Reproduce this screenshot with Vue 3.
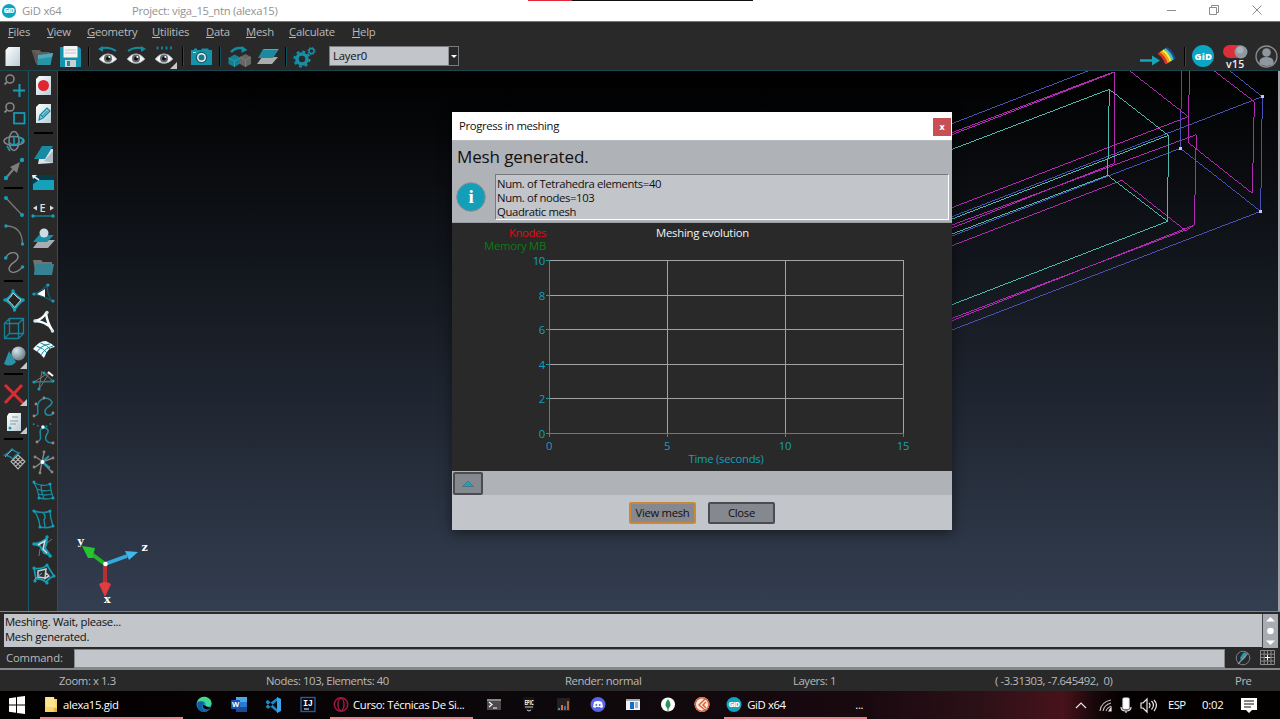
<script setup>
const menus = ['Files', 'View', 'Geometry', 'Utilities', 'Data', 'Mesh', 'Calculate', 'Help']

const T = '#12a0ba'
const dot = (x, y, r = 2, c = T) => `<circle cx="${x}" cy="${y}" r="${r}" fill="${c}"/>`
const dots = (pts, r, c) => pts.map(([x, y]) => dot(x, y, r, c)).join('')
const corner = '<path d="M27 20v7h-7z" fill="#c8c8c8"/>'
const defs =
  '<defs><linearGradient id="paper" x1="0" y1="0" x2="1" y2="1"><stop offset="0" stop-color="#fff"/><stop offset="1" stop-color="#b9cdd6"/></linearGradient></defs>'
const eye =
  '<path d="M5 17Q14 6.500 23 17Q14 26 5 17z" fill="#f2f4f6" stroke="#9aa0a4" stroke-width=".7"/><circle cx="14" cy="16.500" r="4" fill="#60676c"/><circle cx="14" cy="16.500" r="2" fill="#111"/><circle cx="15.300" cy="15" r="1" fill="#fff"/>'

const topTools = [
  [
    defs + '<path d="M8.500 5H20v19H5.500V8z" fill="url(#paper)"/>',
    '<path d="M3.500 8h8l2 2h8v5L8 22z" fill="#625e5b"/><path d="M10 13l15-2-2.500 12H9z" fill="#2794a7"/><path d="M9 13h4l12-2-1 4-14 2z" fill="#4fa9b8"/><path d="M3.500 8l5.500 14 1-9z" fill="#555"/>',
    '<path d="M4 5h19l2 2v18H4z" fill="#1593ad"/><rect x="7.500" y="4" width="14" height="11.500" fill="#f4f4f4"/><path d="M9 8h11M9 11h11" stroke="#c4c4c4"/><rect x="9" y="18" width="11" height="7" fill="#c9d1d4"/><rect x="11" y="19" width="3" height="5" fill="#168da5"/>'
  ],
  [
    eye + '<path d="M22 9Q15 4 7 6.500" fill="none" stroke="#128ca3" stroke-width="2"/><path d="M9 4v6L4 7z" fill="#128ca3"/>',
    eye + '<path d="M6 9Q13 4 21 6.500" fill="none" stroke="#128ca3" stroke-width="2"/><path d="M19 4v6l5-3z" fill="#128ca3"/>',
    eye + '<path d="M7.500 4.500v3M12 4.500v3M16.500 4.500v3M21 4.500v3" stroke="#128ca3" stroke-width="1.700"/>' + corner
  ],
  [
    '<path d="M4 8h3V6.500h3V8h4l1-1.500h6L22 8h3v15H4z" fill="#1692aa"/><circle cx="14.500" cy="15.500" r="5.700" fill="#1f5865"/><circle cx="14.500" cy="15.500" r="4.500" fill="#f1f4f5"/><circle cx="14.500" cy="15.500" r="3" fill="#167b91"/><path d="M6 10.500h3" stroke="#a7dfe8"/>'
  ],
  [
    '<path d="M6 10Q12 4 19 7" fill="none" stroke="#128ca3" stroke-width="2.500"/><path d="M16.500 4l6 4-6 3z" fill="#128ca3"/><path d="M3.500 16l6-3.500 6 3v6l-6 3.500-6-3z" fill="#167f91"/><path d="M3.500 16l6 3 6-3M9.500 19v6" stroke="#2f9bab" fill="none"/><path d="M15 15l5.500-3 5.500 3v7l-5.500 3-5.500-3z" fill="#666"/><path d="M15 15l5.500 3 5.500-3M20.500 18v7" stroke="#7c7c7c" fill="none"/>',
    '<path d="M9 15h16l-6 7H4z" fill="#a9adb0"/><path d="M10 7h16l-6 9H5z" fill="#198a9f"/><path d="M11 7.500h14" stroke="#5fa9b7"/>'
  ],
  [
    '<circle cx="12" cy="17" r="5" fill="none" stroke="#168fa7" stroke-width="3.500"/><circle cx="12" cy="17" r="7.500" fill="none" stroke="#168fa7" stroke-width="2.200" stroke-dasharray="2.950 2.940"/><circle cx="21.500" cy="9" r="2.500" fill="none" stroke="#168fa7" stroke-width="1.500"/><circle cx="21.500" cy="9" r="3.700" fill="none" stroke="#168fa7" stroke-width="1" stroke-dasharray="1.450 1.450"/>'
  ]
]

const leftTools = [
  [
    '<circle cx="10" cy="7" r="4" fill="none" stroke="#858585" stroke-width="1.600"/><path d="M7 10l-2.500 2.500" stroke="#858585" stroke-width="1.800"/><path d="M19.500 12v13M13 18.500h12" stroke="#159eb9" stroke-width="2"/>',
    '<circle cx="10" cy="7" r="4" fill="none" stroke="#858585" stroke-width="1.600"/><path d="M7 10l-2.500 2.500" stroke="#858585" stroke-width="1.800"/><rect x="14" y="13" width="10.500" height="10.500" fill="none" stroke="#159eb9" stroke-width="1.700"/>',
    '<ellipse cx="14" cy="13" rx="10" ry="4.500" fill="none" stroke="#80878c" stroke-width="1.500"/><ellipse cx="14" cy="13" rx="5" ry="9.500" fill="none" stroke="#7b8a90" stroke-width="1.500"/><path d="M14 8v9M10 15q4 4 10-1" stroke="#159eb9" stroke-width="1.500" fill="none"/><path d="M18 9l5 2-2 5M10 23l-3-5" fill="none" stroke="#159eb9" stroke-width="1.500"/>',
    '<path d="M6 22L17 9" stroke="#7d7d7d" stroke-width="2"/><path d="M20 6l-3 11-7-6z" fill="#7d7d7d"/>' + dots([[22, 4], [6, 22]], 2.2)
  ],
  [
    '<path d="M6 5l16 17" stroke="#777" stroke-width="1.300"/>' + dots([[6, 5], [22, 22]]),
    '<path d="M6 5Q22 5 22.500 23" fill="none" stroke="#777" stroke-width="1.300"/>' + dots([[6, 5], [22.5, 23]], 1.7),
    '<path d="M6 9C8 2 18 2 18 8C18 13 9 14 9 20C10 26 19 23 22 18" fill="none" stroke="#888" stroke-width="1.400"/>' + dots([[5.7, 9], [22.5, 18]], 1.8)
  ],
  [
    '<path d="M13 5Q17 11 23.500 14Q19 18 14.500 24Q11 18 5 14Q10 11 13 5z" fill="#159eb9" stroke="#159eb9" stroke-width="1.500"/><path d="M13 7Q17 11.500 21 14Q18 17 14.500 21.500Q11.500 17 7.500 14Q11 11.500 13 7z" fill="#252525" stroke="#d0d0d0"/>' + dots([[13, 5], [23, 14], [14.5, 24], [5, 14]], 1.7),
    '<path d="M4.500 9.500h14v15h-14zM9.500 4.500h14v15h-14zM4.500 9.500l5-5M18.500 9.500l5-5M4.500 24.500l5-5M18.500 24.500l5-5" fill="none" stroke="#158299" stroke-width="1.300"/>',
    '<defs><radialGradient id="ball" cx=".35" cy=".3" r=".7"><stop offset="0" stop-color="#d4e6eb"/><stop offset="1" stop-color="#6f8188"/></radialGradient></defs><circle cx="18.500" cy="11.500" r="7" fill="url(#ball)"/><path d="M9 9l7 11q-5 6-12 2z" fill="#2b91a6"/>' + corner
  ],
  [
    '<path d="M5 6l18 18M22 6L5 24" stroke="#d92d36" stroke-width="3"/>' + corner,
    defs + '<path d="M9 6h12v18H7V9z" fill="url(#paper)"/><path d="M12 10h6M10 14h8M10 17h6" stroke="#8d989e"/><circle cx="10" cy="21" r="1.500" fill="#159eb9"/>' + corner
  ],
  [
    '<path d="M12 5q3 3 7 4-4 2-6 6-3-3-8-4 4-2 7-6z" fill="none" stroke="#218397" stroke-width="1.500"/><path d="M12 6L5 13" stroke="#999"/><path d="M18 11l7 6.500-7 7.500-7-7.500zM15.700 13.200l7 7M20.300 13.200l-7 7M13.300 15.400l7 7M22.700 15.400l-7 7" fill="none" stroke="#b5b5b5" stroke-width="1.100"/>'
  ]
]

const secondTools = [
  [
    '<path d="M10 4h12v19H7V7z" fill="url(#paper)"/><circle cx="14.500" cy="13.500" r="5.500" fill="#e22630"/>',
    '<path d="M10 4h12v19H7V7z" fill="url(#paper)"/><path d="M10 20l1-5 7-7 3 3-7 7z" fill="#8ecbd7" stroke="#1588a0" stroke-width="1.200"/><path d="M12 15l3 3M12.500 17l6-6" stroke="#1588a0"/>'
  ],
  [
    '<path d="M12 9h12v14l-15 1z" fill="#d8e4e8"/><path d="M13 6h11l-8 13H5z" fill="#188ba3"/><path d="M15 21l9-10v12z" fill="#aebdc3"/>',
    '<rect x="3" y="7" width="22" height="15" fill="#083b45"/><path d="M10 12h15v10H4v-6z" fill="#17a0bb"/><path d="M4 8l6 4" stroke="#eee" stroke-width="1.600"/><path d="M3 7h5L4 11z" fill="#eee"/>',
    '<text x="10.500" y="16" font-family="Open Sans" font-size="11" font-weight="600" fill="#dedede">E</text><path d="M4 12l4-2.500v5zM25 12l-4-2.500v5z" fill="#ddd"/><path d="M5 20h19" stroke="#16808f" stroke-width="1.500"/>' + dots([[4, 20], [24, 20]], 1.7),
    '<path d="M10 16h16l-7 8H4z" fill="#a7adb1"/><path d="M10 11h15l-7 7H4z" fill="#178fa7"/><circle cx="15" cy="9" r="4.500" fill="#cbdce3"/>',
    '<path d="M4 8h8l2 2h9v8H6z" fill="#737373"/><path d="M6 12h19l-2 11H5z" fill="#378292"/>',
    '<path d="M18 5q0 9 5 16-8-5-18-7 8-3 13-9z" fill="none" stroke="#185a66" stroke-width="1.400"/><path d="M16 9v8l-8-3z" fill="#fff"/>' + dots([[19, 5], [24, 21], [5, 14]], 1.6),
    '<path d="M17 5q1 9 6 17-3-5-8-7-4-2-9-2 8-2 11-8z" fill="#203238" stroke="#fff" stroke-width="2.400" stroke-linejoin="round"/>' + dots([[18, 4.5], [23.5, 23], [6, 13]], 1.7, '#bdf0f7'),
    '<path d="M4 13q7-9 13-8 5 2 9 6-7 0-11 11-5-6-11-9z" fill="#effcff"/><path d="M7.500 10q7 2 10.500 7M11.500 7q7 2 9.500 6M8 16q4-7 13-8M12 19q4-7 12-9" stroke="#148aa0" fill="none"/>',
    '<path d="M5 18l16-10-11 17 3-18M6 18l18-1L15 9" fill="none" stroke="#777" stroke-width="1"/><path d="M5 18h19" stroke="#287783"/>' + dots([[5, 18], [10, 25], [24, 17], [15, 9]], 1.6) + '<path d="M19 8l5 4" stroke="#fff" stroke-width="2"/>',
    '<path d="M5 24c7-1 2-7 4-12 2-6 10-8 14-2 0 5-8 5-7 10 1 5 6 3 8 2" fill="none" stroke="#198ca0" stroke-width="1.500"/>' + dots([[5, 24], [24, 21], [7, 12], [15, 6]], 1.4, '#988'),
    '<path d="M8 22c7-2 1-10 4-13 5-3 9 1 6 5-3 5-1 9 6 9" fill="none" stroke="#198ca0" stroke-width="1.500"/><path d="M4 4l8 3h4l7-4" stroke="#159eb9" stroke-dasharray="1.500 3" stroke-width="1.500" fill="none"/>' + dots([[8, 22], [24, 23]], 1.4, '#988') + dot(14, 7, 1.7, '#fff'),
    '<path d="M5 20l8-6 2-9M13 14l11-4M13 14l10 10M14 14L7 9M13 14l-2 10" fill="none" stroke="#888" stroke-width="1.400"/><path d="M12 15l8-7M15 15l6 5" stroke="#159eb9" stroke-width="2"/>' + dots([[5, 19], [15, 4], [24, 10], [23, 24], [11, 25], [6, 9]], 1.4, '#888') + dot(13.5, 14, 2, '#fff'),
    '<path d="M5 7q10 4 16 1 1 7 3 14-6 2-14 0Q9 13 5 7zM12 9q0 7 3 14M8 13q7 3 14 1M9 18q7 2 14 0" fill="none" stroke="#198ca0" stroke-width="1.300"/>' + dots([[5, 6], [21, 8], [24, 22], [10, 22]], 1.5),
    '<path d="M5 7q10 3 16 0 0 7 3 15-6 3-13 1Q10 13 5 7zM13 8q5 4 2 8l1 7" fill="none" stroke="#198ca0" stroke-width="1.400"/>' + dots([[5, 7], [21, 7], [24, 22], [11, 23]], 1.5),
    '<path d="M5 12q8-1 13-6 0 6-2 10l5 7-6-2-4-7z" fill="#26353a" stroke="#159eb9" stroke-width="2"/><path d="M9 13l7-4-2 8 4 4" fill="none" stroke="#ddd" stroke-width="1.500"/><path d="M23 7l-5 4M11 17l-1 7" fill="none" stroke="#777"/>' + dots([[18, 5], [5, 12], [21, 24]], 1.7),
    '<path d="M5 8q8 2 13-3l7 11q-5 2-8 6-5-4-10-3z" fill="#233237" stroke="#159eb9" stroke-width="1.700"/><path d="M9 11l8-2-1 9-7-1zM16 12l4 4-5 3" fill="none" stroke="#ccc" stroke-width="1.500"/><path d="M5 20l8-7" stroke="#7aa"/>' + dots([[5, 8], [18, 5], [25, 16], [6, 21], [18, 23]], 1.6)
  ]
]

const xTicks = [0, 1, 2, 3].map(i => ({ x: Math.floor(549 + i * 118.2) + 0.5, label: i * 5 }))
const yTicks = [0, 1, 2, 3, 4, 5].map(i => ({ y: Math.round(434 - i * 34.6) - 0.5, label: i * 2 }))

const status = ['Zoom: x 1.3', 'Nodes: 103, Elements: 40', 'Render: normal', 'Layers: 1', '( -3.31303, -7.645492,\u00a0 0)', 'Pre']

const appIcons = {
  start: '<path d="M2 4.200l7-1v7.300H2zM10 3l8-1v8.500h-8zM2 11.500h7v7.300l-7-1zM10 11.500h8V20l-8-1z" fill="#fff"/>',
  folder: '<path d="M4 3h9v2h3v13H4z" fill="#f6d56c"/><path d="M5 3h8l2 10H5z" fill="#ffe391"/><path d="M13 14h3v4h-3z" fill="#e8b63c"/>',
  edge: '<circle cx="10" cy="10.500" r="7.500" fill="#178dd5"/><path d="M3 8C6 0 17 2 17.500 9c0 5-6 4-6 2 1-4-4-5-8.500-3z" fill="#43d78e"/><path d="M4 8c6-2 7 2 4 4 0 5 5 4 8 2-2 5-9 5-12 0-1-3 0-6 0-6z" fill="#125d9f"/><path d="M9 11c3 0 3 3 8 2l-2 2c-4 1-7-1-6-4z" fill="#090507"/>',
  word: '<path d="M7 3h10q1 0 1 1v13q0 1-1 1H7z" fill="#287bd3"/><path d="M7 3h11v5H7z" fill="#4ba6ec"/><path d="M7 13h11v5H7z" fill="#174c99"/><rect x="2" y="6" width="9" height="9" rx="1" fill="#1751af"/><text x="6.500" y="13" text-anchor="middle" font-family="Open Sans" font-size="7.500" font-weight="700" fill="#fff">W</text>',
  code: '<path d="M3 7l2-1 10 10V19L3 9zM3 13l2 2L15 6V3L3 12z" fill="#168acd"/><path d="M14 3l4 2v12l-4 2z" fill="#32a7ee"/>',
  idea: '<rect x="3" y="3.500" width="14" height="14" fill="#05070c" stroke="#245b9c" stroke-width="1.400"/><text x="5" y="11.500" font-family="Liberation Mono" font-size="8.500" font-weight="700" fill="#fff">IJ</text><path d="M6 15h5" stroke="#fff"/>',
  opera: '<ellipse cx="10" cy="10.500" rx="6.700" ry="6.700" fill="none" stroke="#a3183e" stroke-width="1.500"/><ellipse cx="10" cy="10.500" rx="3" ry="6" fill="none" stroke="#a3183e" stroke-width="1.500"/>',
  term: '<rect x="3" y="5" width="14" height="11" fill="#4b4b4d"/><path d="M3 5h14v2H3z" fill="#888"/><path d="M5 8l3 2.500-3 2.500M9 14h4" fill="none" stroke="#fff" stroke-width="1.200"/>',
  epic: '<path d="M4.500 3h11v12l-5.500 3-5.500-3z" fill="#161416"/><text x="10" y="10.500" text-anchor="middle" font-family="Open Sans" font-size="7" font-weight="700" textLength="9" lengthAdjust="spacingAndGlyphs" fill="#eee">EPIC</text><path d="M6 13h8M8 16l2 1 2-1" stroke="#ccc" fill="none"/>',
  bars: '<rect x="4" y="4" width="13" height="13" fill="#252020"/><path d="M6 14v2" stroke="#4f9668" stroke-width="2"/><path d="M9 11v5" stroke="#e96436" stroke-width="2"/><path d="M12 12v4" stroke="#436db0" stroke-width="2"/><path d="M15 7v9" stroke="#b36a27" stroke-width="2"/>',
  discord: '<circle cx="10" cy="10.500" r="7.500" fill="#5965e8"/><path d="M6 8q4-2 8 0l1 5-2 1-1-1H8l-1 1-2-1z" fill="#fff"/><circle cx="8.300" cy="11" r="1" fill="#5965e8"/><circle cx="11.700" cy="11" r="1" fill="#5965e8"/>',
  panel: '<rect x="3" y="5" width="14" height="11" fill="#f2f2f2"/><path d="M3 5h14v2H3z" fill="#aaa"/><rect x="7" y="8" width="4" height="7" fill="#176bc0"/><path d="M12 9h3M12 11h3M12 13h3" stroke="#287bc7"/>',
  leaf: '<circle cx="10" cy="10.500" r="7" fill="#fff"/><path d="M10 5q5 6 0 10-5-4 0-10z" fill="#29965b"/><path d="M10 10v7" stroke="#4a7d59"/>',
  chip: '<circle cx="10" cy="10.500" r="7.500" fill="#f2ece7"/><path d="M13 5l-6 6 6 5M14 8l-3 3 3 3" fill="none" stroke="#dc6638" stroke-width="1.500"/><circle cx="10" cy="10.500" r="6.700" fill="none" stroke="#da6335" stroke-width="1.400"/>',
  gid: '<circle cx="10" cy="10.500" r="7.500" fill="#10a3bd"/><text x="10" y="13" text-anchor="middle" font-family="Open Sans" font-size="7" font-weight="800" textLength="11" fill="#fff">GiD</text>'
}
const pinned1 = ['edge', 'word', 'code', 'idea']
const pinned2 = ['term', 'epic', 'bars', 'discord', 'panel', 'leaf', 'chip']
</script>

<template>
  <div class="screen">
    <header class="titlebar">
      <i class="topmark"></i>
      <svg class="logo" viewBox="1.500 2 17 17" v-html="appIcons.gid"></svg>
      <span class="app-name">GiD x64</span>
      <span class="project">Project: viga_15_ntn (alexa15)</span>
      <svg class="win" width="100" height="21" viewBox="0 0 100 21" fill="none" stroke="#8c8c8c">
        <path d="M2 10.500h9M44.500 7.500h7v7h-7zM46.500 7.500v-2h7v7h-2M87.500 5.500l9 9M96.500 5.500l-9 9" />
      </svg>
    </header>

    <nav class="menu">
      <span v-for="m in menus" :key="m"><u>{{ m[0] }}</u>{{ m.slice(1) }}</span>
    </nav>

    <div class="toolbar">
      <template v-for="(group, g) in topTools" :key="g">
        <i v-if="g" class="vsep"></i>
        <svg v-for="(ic, i) in group" :key="i" class="ic" viewBox="0 0 28 28" v-html="ic"></svg>
      </template>
      <div class="combo"><span>Layer0</span><b></b></div>
      <div class="right-tools">
        <svg width="40" height="28" viewBox="0 0 40 28">
          <path d="M0 18.500h14" stroke="#1ba3b8" stroke-width="2.500" /><path d="M12 13.500l8 5-8 5z" fill="#1ba3b8" />
          <g fill="none" stroke-width="2.600">
            <path d="M26.500 6q6 4 8 11" stroke="#194d8e" /><path d="M24.500 7.200q6 4 8 11" stroke="#3ec0d3" />
            <path d="M22.500 8.400q6 4 8 11" stroke="#f5ee3c" /><path d="M20.500 9.600q6 4 8 11" stroke="#f79a20" />
            <path d="M18.500 11q6 4 8 11" stroke="#e33127" />
          </g>
        </svg>
        <i class="vsep"></i>
        <svg width="22" height="22" viewBox="0 0 22 22">
          <circle cx="11" cy="11" r="11" fill="#0ba6c3" />
          <text x="11" y="14.500" text-anchor="middle" class="gidtext" textLength="17">GiD</text>
        </svg>
        <svg width="28" height="27" viewBox="0 0 28 27">
          <rect x="1" y="2" width="23" height="13" rx="6.500" fill="#dd2f3b" />
          <circle cx="19" cy="9" r="6.500" fill="#8e98a1" /><circle cx="18" cy="7" r="3.500" fill="#a9b1b8" />
          <text x="4" y="24.500" class="ver" textLength="18">v15</text>
        </svg>
        <svg width="23" height="23" viewBox="0 0 23 23">
          <circle cx="11.500" cy="11.500" r="10.500" fill="#2d2d2f" stroke="#8b8b8b" stroke-width="1.300" />
          <circle cx="11.500" cy="7.500" r="4.300" fill="#8e979f" /><path d="M4.500 19q-1-7 7-7t7 7q-7 4-14 0z" fill="#8e979f" />
        </svg>
      </div>
    </div>

    <main class="work">
      <aside v-for="(col, c) in [leftTools, secondTools]" :key="c" :class="['side', 'side' + c]">
        <template v-for="(group, g) in col" :key="g">
          <i v-if="g" class="hsep"></i>
          <svg v-for="(ic, i) in group" :key="i" class="ic" viewBox="0 0 28 28" v-html="ic"></svg>
        </template>
      </aside>
      <section class="viewport">
        <svg class="scene" width="1220" height="540" viewBox="58 71 1220 540">
          <g transform="translate(940 70) scale(.33333)" fill="none" stroke-width="3" shape-rendering="crispEdges">
            <g stroke="#4a50b4">
              <path d="M36 161L443 3M870 3l97 77-5 344L36 780M725 3l-4 232 241 189M967 80L36 440M721 235L36 498" />
            </g>
            <g stroke="#b02bb0">
              <path d="M36 188L515 8M36 194L525 6l-2 274L36 474M570 3l175 137L36 413M748 3l-3 215 192 152 6-275L823 3" />
              <path d="M36 465L769 194l-6 271-26 17-191-151L36 527M36 745L737 480M36 752L763 465" />
            </g>
            <g stroke="#4eb8ab">
              <path d="M36 238L508 58l177 138-2 258L36 704M508 58l-5 258 180 138M685 196L36 447M503 316L36 492" />
            </g>
            <path d="M963 76h8v8h-8zM717 231h8v8h-8zM958 420h8v8h-8z" fill="#c6c6ec" />
          </g>
          <g>
            <path d="M105 564L93 555" stroke="#20b528" stroke-width="4" /><path d="M82 546l13 2-1 4-1 6-5 0z" fill="#25c52d" />
            <path d="M105 564l22-8" stroke="#35a8dc" stroke-width="3.500" /><path d="M125 551l13 1-9 8z" fill="#40b8ea" />
            <path d="M105 564v22" stroke="#bc2d32" stroke-width="4" /><path d="M99 584q6-4 12 0l-6 13z" fill="#e23b40" />
            <circle cx="105.500" cy="564" r="2.300" fill="#fff" />
            <g class="axis"><text x="77.500" y="545">y</text><text x="141.500" y="551">z</text><text x="104" y="603">x</text></g>
          </g>
        </svg>

        <div class="dialog">
          <div class="dlg-title"><span>Progress in meshing</span><b>x</b></div>
          <div class="dlg-head">
            <h1>Mesh generated.</h1>
            <div class="info">
              <svg width="30" height="30" viewBox="0 0 30 30">
                <circle cx="15" cy="15" r="14.300" fill="#149fb8" stroke="#8b8e92" />
                <text x="15" y="21" text-anchor="middle" class="i">i</text>
              </svg>
              <p><span>Num. of Tetrahedra elements=40</span><span>Num. of nodes=103</span><span>Quadratic mesh</span></p>
            </div>
          </div>
          <svg class="chart" width="500" height="248" viewBox="452 223 500 248">
            <g stroke="#a3a3a3">
              <path v-for="t in xTicks" :key="'x' + t.label" :d="`M${t.x} 261V434`" />
              <path v-for="t in yTicks" :key="'y' + t.label" :d="`M549 ${t.y}H904`" />
            </g>
            <g stroke="#1799ae">
              <path d="M549.500 260V434M549 433.500h355" />
              <path v-for="t in xTicks" :key="'tx' + t.label" :d="`M${t.x} 433v4`" />
              <path v-for="t in yTicks" :key="'ty' + t.label" :d="`M546 ${t.y}h3`" />
            </g>
            <g fill="#189fbc">
              <text v-for="t in xTicks" :key="'lx' + t.label" :x="t.x - 0.5" y="449.500" text-anchor="middle">{{ t.label }}</text>
              <text v-for="t in yTicks" :key="'ly' + t.label" x="545" :y="t.y + 4.500" text-anchor="end">{{ t.label }}</text>
              <text x="688.500" y="463" textLength="75">Time (seconds)</text>
            </g>
            <text x="509" y="237" textLength="37" fill="#e00b12">Knodes</text>
            <text x="484" y="250" textLength="62" fill="#097c12">Memory MB</text>
            <text x="656" y="237" textLength="93" fill="#f4f4f4">Meshing evolution</text>
          </svg>
          <div class="strip">
            <button><svg width="14" height="8" viewBox="0 0 14 8"><path d="M1.500 6.500L7 1l5.500 5.500z" fill="#18a3bb" stroke="#4b7780" /></svg></button>
          </div>
          <div class="actions"><button class="focus">View mesh</button><button>Close</button></div>
        </div>
      </section>
    </main>

    <section class="log">
      <div class="lines"><span>Meshing. Wait, please...</span><span>Mesh generated.</span></div>
      <svg width="15" height="34" viewBox="0 0 15 34"><path d="M3 7.500L7.500 3 12 7.500zM3 26.500l4.500 4.500 4.500-4.500z" fill="#fff" /><circle cx="7.500" cy="17" r="3.300" fill="#fff" /></svg>
    </section>
    <section class="command">
      <label>Command:</label>
      <div class="input"></div>
      <svg width="16" height="16" viewBox="0 0 16 16"><circle cx="8" cy="8" r="6.800" fill="none" stroke="#778087" /><path d="M6 10L5 8l3-5 3-1v5l-3 3z" fill="#169eb5" /><path d="M3 14L13 3" stroke="#8c969b" stroke-width="1.200" /></svg>
      <svg width="16" height="16" viewBox="0 0 16 16"><path d="M.5.5h14v14H.5zM4.200 0v15M7.500 0v15M11 0v15M0 4.200h15M0 7.500h15M0 11h15" fill="none" stroke="#8c8c8c" /><path d="M7.500 5v5M5 7.500h5" stroke="#fff" /></svg>
    </section>
    <section class="status"><span v-for="s in status" :key="s">{{ s }}</span></section>

    <footer class="taskbar">
      <svg class="tb start" viewBox="0 0 20 21" v-html="appIcons.start"></svg>
      <div class="task t1"><svg class="tb" viewBox="0 0 20 21" v-html="appIcons.folder"></svg><span>alexa15.gid</span></div>
      <div class="pins"><svg v-for="p in pinned1" :key="p" class="tb" viewBox="0 0 20 21" v-html="appIcons[p]"></svg></div>
      <div class="task t2"><svg class="tb" viewBox="0 0 20 21" v-html="appIcons.opera"></svg><span>Curso: Técnicas De Si...</span></div>
      <div class="pins"><svg v-for="p in pinned2" :key="p" class="tb" viewBox="0 0 20 21" v-html="appIcons[p]"></svg></div>
      <div class="task t3"><svg class="tb" viewBox="0 0 20 21" v-html="appIcons.gid"></svg><span>GiD x64</span><em>...</em></div>
      <div class="tray">
        <svg width="88" height="20" viewBox="0 0 88 20" fill="none" stroke="#e8e8e8" stroke-width="1.200">
          <path d="M1 13l5-5 5 5" />
          <path d="M25 16Q26 7 36 5M28 16Q29 10 36 8M31 16Q32 13 36 11" stroke="#b9b9b9" /><path d="M34 16l2-3v3z" fill="#fff" />
          <rect x="48" y="3" width="6" height="11" rx="1" fill="#fff" /><path d="M46 12q0 4 5 4t5-4M51 16v2" />
          <path d="M66 8h2l4-4v13l-4-4h-2zM74 8q2 2 0 5M76.500 6q4 4 0 8.500M79 5q5 5 0 11" />
        </svg>
        <span class="esp">ESP</span><span class="time">0:02</span>
        <svg width="16" height="17" viewBox="0 0 16 17"><path d="M0 1h16v12h-5l-3 3-3-3H0z" fill="#fff" /><path d="M3 4h10M3 7h10M3 10h7" stroke="#16090b" /></svg>
      </div>
    </footer>
  </div>
</template>

<style>
body { margin: 0; overflow: hidden; background: #000; }
</style>

<style scoped>
.screen { width: 1280px; height: 719px; display: flex; flex-direction: column; font: 11.3px/14px "Open Sans", "Noto Sans", sans-serif; letter-spacing: -.36px; background: #292929; color: #b8babd; white-space: nowrap; overflow: hidden; }
svg { display: block; flex: none; }
.screen > * { flex: none; box-sizing: border-box; }
.titlebar { position: relative; height: 22px; display: flex; align-items: center; background: #fff; border-bottom: 1px solid #777; color: #929292; }
.topmark { position: absolute; left: 528px; top: 0; width: 225px; height: 1px; background: linear-gradient(90deg, #e02a39 44px, #111 44px); }
.logo { width: 16px; height: 16px; margin-left: 1px; }
.app-name { width: 110px; margin-left: 5px; letter-spacing: -.2px; }
.project { letter-spacing: -.3px; }
.win { margin-left: auto; margin-right: 15px; }
.menu { height: 20px; padding-left: 8px; display: grid; grid-template-columns: 39px 40px 65px 54px 40px 43px 63px 40px; align-items: center; letter-spacing: -.25px; }
.menu u { text-underline-offset: 1px; }
.toolbar { height: 29px; display: flex; align-items: center; border-bottom: 1px solid #1b4651; }
.ic { width: 28px; height: 28px; }
.vsep { flex: none; width: 9.5px; height: 19px; background: linear-gradient(90deg, transparent 4px, #000 4px, #000 5px, #15515d 5px, #15515d 6px, transparent 6px); }
.combo { width: 130px; height: 20px; box-sizing: border-box; margin-left: 11px; display: flex; border: 1px solid #777b80; background: #c2c5ca; color: #111; line-height: 18px; }
.combo span { flex: 1; padding-left: 3px; letter-spacing: -.2px; }
.combo b { width: 9px; background: #292929; border-left: 1px solid #8d9196; display: grid; place-items: center; }
.combo b::after { content: ""; border: 3px solid transparent; border-top-color: #fff; border-bottom: 0; }
.right-tools { margin-left: auto; margin-right: 2px; display: flex; align-items: center; }
.right-tools > svg:nth-of-type(2) { margin: 0 8px 0 3px; }
.right-tools > svg:nth-of-type(3) { margin-right: 5px; }
.gidtext { font: 800 9.500px "Open Sans"; fill: #fff; }
.ver { font: 600 10.500px "Open Sans"; fill: #eee; }
.work { height: 540px; display: flex; }
.side { width: 29px; box-sizing: border-box; padding-top: 1px; border-right: 1px solid #185765; }
.hsep { display: block; width: 19px; height: 9px; margin-left: 4px; background: linear-gradient(transparent 3px, #000 3px, #000 5px, transparent 5px); }
.side1 .hsep { height: 12px; margin-left: 5px; background-position-y: 1px; }
.viewport { position: relative; flex: 1; border-right: 2px solid #9ea1a6; background: linear-gradient(#000, #333e50); }
.dialog { position: absolute; left: 394px; top: 41px; width: 500px; height: 418px; display: flex; flex-direction: column; color: #101010; background: #c2c5ca; box-shadow: 0 3px 12px rgba(0, 0, 0, .45); }
.dlg-title { height: 29px; box-sizing: border-box; border-bottom: 1px solid #b7babf; display: flex; align-items: center; background: #fff; padding-left: 7px; }
.dlg-title b { width: 18px; height: 18px; margin-left: auto; margin-right: 1px; margin-top: 2px; background: #c65054; color: #fff; font-size: 9px; line-height: 17px; text-align: center; }
.dlg-head { height: 82px; box-sizing: border-box; background: #afb2b7; border-bottom: 1px solid #9b9ea3; }
h1 { margin: 0; padding: 4px 0 0 5px; font-size: 17px; line-height: 24px; font-weight: 400; letter-spacing: -.12px; }
.info { display: flex; align-items: center; padding: 5px 3px 0 4px; }
.i { font: 700 19px "Liberation Serif"; fill: #fff; }
.info p { flex: 1; height: 46px; box-sizing: border-box; margin: 0 0 0 8.500px; padding: 2px 1px 0 1.500px; display: flex; flex-direction: column; background: #c2c5ca; border: solid #fff; border-width: 1px; border-top-color: #75787d; border-left-color: #75787d; }
.chart { background: #292929; font: 11.3px "Open Sans"; letter-spacing: -.3px; shape-rendering: crispEdges; }
.strip { height: 24px; background: #afb2b7; padding-left: 1px; }
button { box-sizing: border-box; width: 67px; height: 22px; padding: 0; font: inherit; letter-spacing: -.3px; color: #101010; background: #85888e; border: 2px solid #4b4c50; border-radius: 2px; }
.strip button { width: 30px; height: 23px; margin-top: 1px; display: grid; place-items: center; }
.actions { height: 35px; padding-left: 177px; display: flex; align-items: center; gap: 12px; }
.focus { border-color: #ca873e; }
.axis { font: 700 11px "DejaVu Serif"; fill: #fff; }
.log { height: 37px; padding: 2px 2px 1px 4px; display: flex; background: #292929; border-top: 1px solid #81858b; }
.lines { flex: 1; display: flex; flex-direction: column; background: #c2c5ca; color: #111; line-height: 15px; padding: 0 0 0 1px; border-right: 1px solid #44464a; letter-spacing: -.3px; }
.log svg { background: #a9acb1; }
.command { height: 20px; display: flex; align-items: center; padding-left: 6px; }
.command label { width: 68px; letter-spacing: -.15px; }
.input { width: 1151px; height: 19px; box-sizing: border-box; background: #c2c5ca; border: 1px solid #85898e; }
.command svg { margin-left: 10px; }
.command svg + svg { margin-left: 9px; }
.status { height: 23px; border-top: 2px double #84878b; padding: 1px 0 0 59px; display: grid; grid-template-columns: 207px 299px 228px 202px 240px auto; align-items: center; letter-spacing: -.4px; }
.taskbar { height: 28px; display: flex; background: linear-gradient(90deg, #030000 0, #080305 300px, #0d080b 560px, #18090f 860px, #2c1017 980px, #48121a 1063px, #18070a 1095px, #050001 1120px, #030000); color: #fff; }
.tb { width: 20px; height: 21px; margin-top: 3px; }
.start { margin-left: 7px; }
.task { height: 28px; box-sizing: border-box; width: 143px; display: flex; align-items: flex-start; border-bottom: 2px solid #e8848d; }
.task span, .task em { line-height: 27px; margin-left: 2px; font-style: normal; }
.t1 { margin-left: 13px; }
.t1 .tb { margin-left: 1px; }
.pins { display: flex; gap: 14.7px; margin: 0 12px 0 11px; }
.t2 .tb { margin-left: 1px; }
.t3 span { margin-left: 3px; }
.t3 em { margin-left: auto; margin-right: 4px; }
.tray { margin-left: auto; margin-right: 31px; display: flex; align-items: center; letter-spacing: -.2px; }
.esp { width: 34px; margin-left: 5px; letter-spacing: -.6px; }
.time { width: 39px; }
.tray > svg:last-child { margin-right: -8px; }
</style>
